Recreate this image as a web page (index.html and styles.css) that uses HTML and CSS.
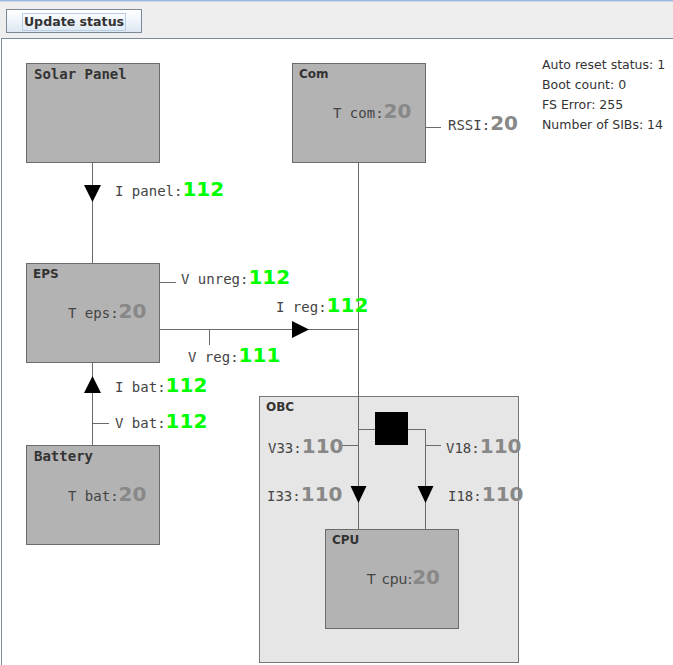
FILE: index.html
```html
<!DOCTYPE html>
<html>
<head>
<meta charset="utf-8">
<title>Status</title>
<link rel="stylesheet" href="styles.css">
</head>
<body>
<div class="toolbar">
  <button class="btn"><span class="btn-text">Update status</span></button>
</div>
<div class="canvas">
  <div class="node box solar"><span class="title mono">Solar Panel</span></div>
  <div class="node box com"><span class="title">Com</span></div>
  <div class="node box eps"><span class="title">EPS</span></div>
  <div class="node box battery"><span class="title mono">Battery</span></div>
  <div class="node obc"><span class="title">OBC</span></div>
  <div class="node box cpu"><span class="title">CPU</span></div>

  <svg class="wires" width="671" height="626" viewBox="0 0 671 626">
    <g transform="translate(-2,-39)">
      <path class="wire" d="M92.5 163 V263 M92.5 362 V445 M92 423.5 H109 M160 282.5 H176 M160 329.5 H358 M209.5 329 V345 M358.5 163 V529 M426 127.5 H441 M358 429.5 H375 M408 429.5 H425.5 M425.5 429 V529 M341 445.5 H358 M425 445.5 H441"/>
      <polygon class="arrow" points="84,185 101,185 92.5,202"/>
      <polygon class="arrow" points="84,393 101,393 92.5,376"/>
      <polygon class="arrow" points="292,321 292,338 309,329.5"/>
      <polygon class="arrow" points="350.5,486 366.5,486 358.5,503"/>
      <polygon class="arrow" points="417.5,486 433.5,486 425.5,503"/>
      <rect class="reg" x="375" y="412" width="33" height="33"/>
    </g>
  </svg>

  <div class="lbl l-ipanel"><span class="k">I panel:</span><span class="v ok">112</span></div>
  <div class="lbl l-vunreg"><span class="k">V unreg:</span><span class="v ok">112</span></div>
  <div class="lbl l-ireg"><span class="k">I reg:</span><span class="v ok">112</span></div>
  <div class="lbl l-vreg"><span class="k">V reg:</span><span class="v ok">111</span></div>
  <div class="lbl l-teps"><span class="k">T eps:</span><span class="v dim">20</span></div>
  <div class="lbl l-ibat"><span class="k">I bat:</span><span class="v ok">112</span></div>
  <div class="lbl l-vbat"><span class="k">V bat:</span><span class="v ok">112</span></div>
  <div class="lbl l-tbat"><span class="k">T bat:</span><span class="v dim">20</span></div>
  <div class="lbl l-tcom"><span class="k">T com:</span><span class="v dim">20</span></div>
  <div class="lbl l-rssi"><span class="k">RSSI:</span><span class="v dim">20</span></div>
  <div class="lbl l-v33"><span class="k">V33:</span><span class="v dim">110</span></div>
  <div class="lbl l-v18"><span class="k">V18:</span><span class="v dim">110</span></div>
  <div class="lbl l-i33"><span class="k">I33:</span><span class="v dim">110</span></div>
  <div class="lbl l-i18"><span class="k">I18:</span><span class="v dim">110</span></div>
  <div class="lbl l-tcpu"><span class="k sans">T cpu:</span><span class="v dim">20</span></div>

  <div class="info">
    <div>Auto reset status: 1</div>
    <div>Boot count: 0</div>
    <div>FS Error: 255</div>
    <div>Number of SIBs: 14</div>
  </div>
</div>
</body>
</html>
```

FILE: styles.css
```css
html, body {
  margin: 0;
  padding: 0;
  background: #ffffff;
  overflow: hidden;
}

body {
  font-family: "DejaVu Sans", sans-serif;
}

.toolbar {
  box-sizing: border-box;
  height: 38px;
  background: #eeeeee;
  border-top: 1px solid #9db5da;
  box-shadow: inset 0 1px 0 #c9d8ee;
  padding: 8px 0 0 6px;
}

.btn {
  box-sizing: border-box;
  width: 136px;
  height: 24px;
  margin: 0;
  padding: 1px 0 0 0;
  border: 1px solid #7a8a99;
  border-radius: 0;
  background: linear-gradient(to bottom, #ffffff 0%, #f4f8fc 35%, #dde8f3 100%);
  display: flex;
  align-items: center;
  justify-content: center;
  font-family: "DejaVu Sans", sans-serif;
  font-weight: bold;
  font-size: 12.6px;
  color: #333333;
}

.btn-text {
  border: 1px solid #b8cfe5;
  padding: 0 1px;
  line-height: 16px;
}

.canvas {
  position: relative;
  margin-left: 1px;
  border-top: 1px solid #7a8a99;
  border-left: 1px solid #7a8a99;
  height: calc(100vh - 39px);
  background: #ffffff;
}

.node {
  position: absolute;
  box-sizing: border-box;
  padding: 2px 0 0 6px;
}

.box {
  width: 134px;
  height: 100px;
  background: #b3b3b3;
  border: 1px solid #6b6b6b;
}

.solar { left: 24px; top: 24px; }
.com { left: 290px; top: 24px; }
.eps { left: 24px; top: 224px; }
.battery { left: 24px; top: 406px; }
.cpu { left: 323px; top: 490px; }

.obc {
  left: 257px;
  top: 357px;
  width: 260px;
  height: 267px;
  background: #e6e6e6;
  border: 1px solid #777777;
}

.title {
  display: block;
  font-family: "DejaVu Sans", sans-serif;
  font-weight: bold;
  font-size: 12px;
  line-height: 16px;
  color: #333333;
}

.title.mono {
  font-family: "DejaVu Sans Mono", monospace;
  font-size: 14px;
  padding-left: 1px;
}

.wires {
  position: absolute;
  left: 0;
  top: 0;
  pointer-events: none;
}

.wire {
  fill: none;
  stroke: #6a6a6a;
  stroke-width: 1;
}

.arrow {
  fill: #000000;
}

.reg {
  fill: #000000;
}

.lbl {
  position: absolute;
  display: flex;
  align-items: baseline;
  white-space: nowrap;
  line-height: 20px;
}

.k {
  font-family: "DejaVu Sans Mono", monospace;
  font-size: 14px;
  color: #444444;
}

.k.sans {
  font-family: "DejaVu Sans", sans-serif;
  word-spacing: 2px;
}

.v {
  font-family: "DejaVu Sans", sans-serif;
  font-weight: bold;
  font-size: 20px;
}

.v.ok { color: #00ff00; }
.v.dim { color: #888888; }

.l-ipanel { left: 113px; top: 140px; }
.l-vunreg { left: 179px; top: 228px; }
.l-ireg { left: 274px; top: 256px; }
.l-vreg { left: 186px; top: 306px; }
.l-teps { left: 66px; top: 262px; }
.l-ibat { left: 113px; top: 336px; }
.l-vbat { left: 113px; top: 372px; }
.l-tbat { left: 66px; top: 445px; }
.l-tcom { left: 331px; top: 62px; }
.l-rssi { left: 446px; top: 74px; }
.l-v33 { left: 266px; top: 397px; }
.l-v18 { left: 444px; top: 397px; }
.l-i33 { left: 265px; top: 445px; }
.l-i18 { left: 446px; top: 445px; }
.l-tcpu { left: 365px; top: 528px; }

.info {
  position: absolute;
  left: 540px;
  top: 16px;
  font-family: "DejaVu Sans", sans-serif;
  font-size: 12.5px;
  line-height: 20px;
  color: #333333;
}
```
